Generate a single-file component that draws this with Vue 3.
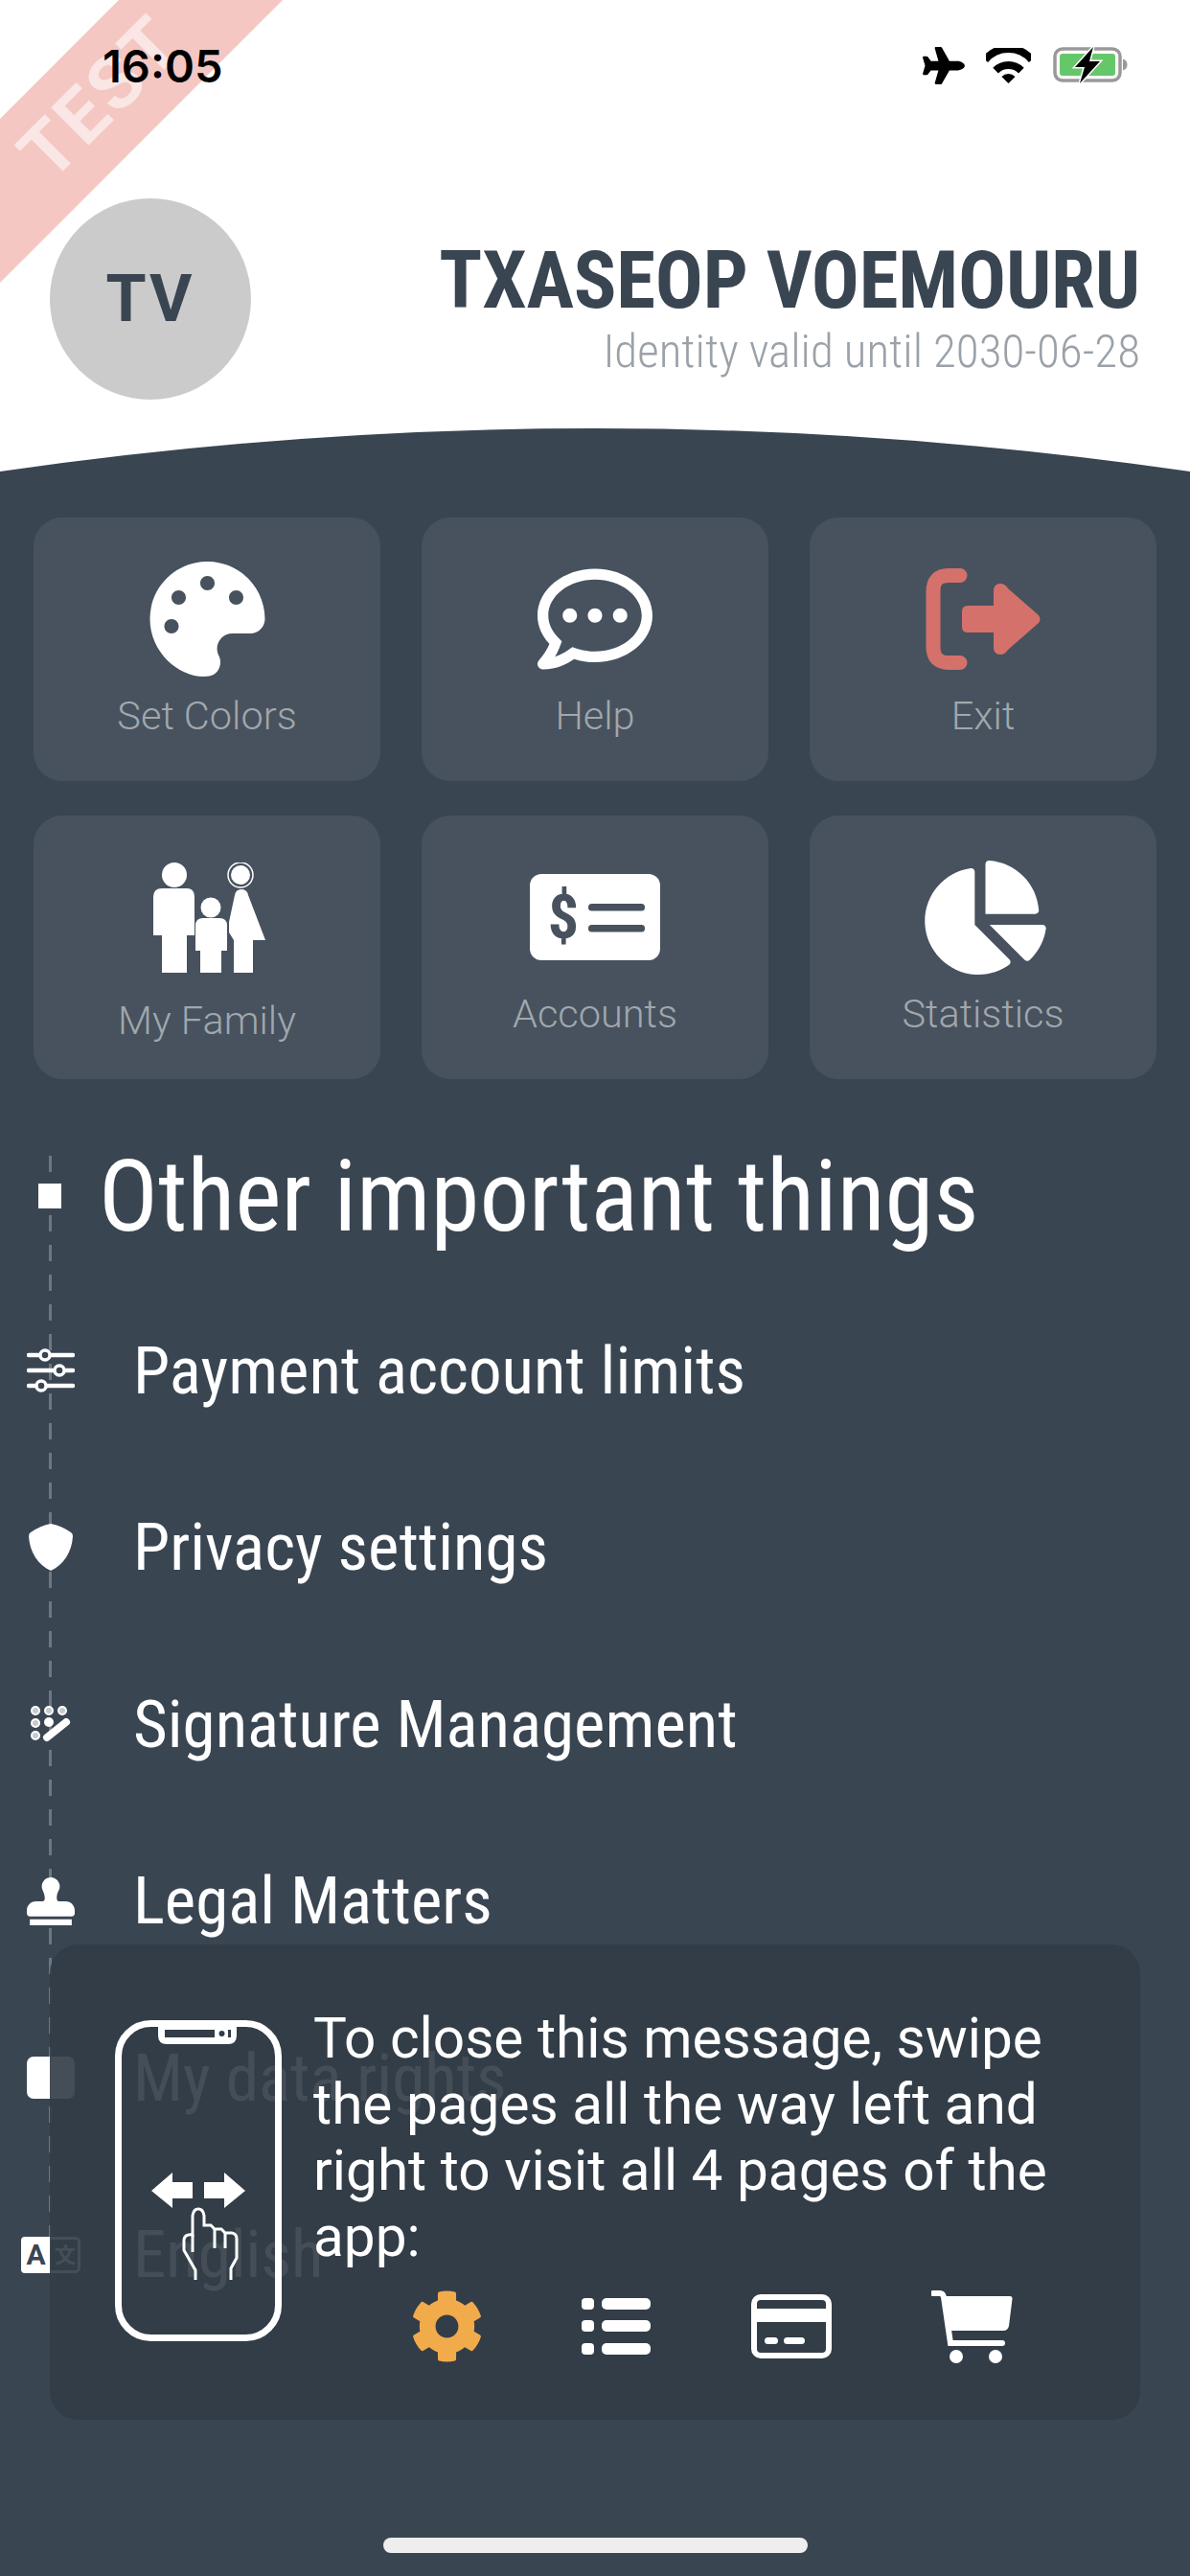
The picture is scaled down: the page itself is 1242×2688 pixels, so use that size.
<template>
  <div class="page">
    <div class="ribbon"><span class="ribbon-text">TEST</span></div>

    <header class="top">
      <div class="status-bar">
        <span class="time">16:05</span>
        <div class="status-icons">
          <svg class="st-plane" viewBox="0 0 576 512"><path fill="#000" d="M480 192H365.71L260.61 8.06A16.014 16.014 0 0 0 246.71 0h-65.5c-10.63 0-18.3 10.17-15.38 20.39L214.86 192H112l-43.2-57.6c-3.02-4.03-7.77-6.4-12.8-6.4H16.01C5.6 128-2.04 137.78.49 147.88L32 256 .49 364.12C-2.04 374.22 5.6 384 16.01 384H56c5.04 0 9.78-2.37 12.8-6.4L112 320h102.86l-49.03 171.6c-2.92 10.22 4.75 20.4 15.38 20.4h65.5c5.74 0 11.04-3.08 13.89-8.06L365.71 320H480c35.35 0 96-28.65 96-64s-60.65-64-96-64z" /></svg>
          <svg class="st-wifi" viewBox="0 0 47 37">
            <path d="M-1 12.4A32 32 0 0 1 48 12.4" fill="none" stroke="#000" stroke-width="8" />
            <path d="M10.1 23.6A19 19 0 0 1 36.9 23.6" fill="none" stroke="#000" stroke-width="8" />
            <path d="M23.5 37L16.4 29.9A10 10 0 0 1 30.6 29.9Z" fill="#000" />
          </svg>
          <svg class="st-battery" viewBox="0 0 80 40">
            <rect x="2" y="3" width="68" height="33" rx="8" fill="none" stroke="#999" stroke-width="3.5" />
            <rect x="7" y="8" width="58" height="23" rx="3" fill="#66c76a" />
            <path d="M73 13.5c3 1 4.5 3 4.5 6s-1.500 5-4.500 6z" fill="#999" />
            <path d="M42 1L23 22H33L28 39L49 16H38Z" fill="#000" stroke="#fff" stroke-width="3" paint-order="stroke" />
          </svg>
        </div>
      </div>

      <div class="profile">
        <div class="avatar">TV</div>
        <div class="identity">
          <div class="name">TXASEOP VOEMOURU</div>
          <div class="valid">Identity valid until 2030-06-28</div>
        </div>
      </div>
    </header>

    <svg class="curve" viewBox="0 0 1242 45" preserveAspectRatio="none">
      <path d="M0 45Q621 -45 1242 45Z" fill="#3a4552" />
    </svg>

    <main class="content">
      <section class="tiles">
        <div v-for="tile in tiles" :key="tile.label" class="tile">
          <div class="tile-icon">
            <svg
              :class="{ nudge: tile.label === 'Statistics' || tile.label === 'My Family' }"
              :viewBox="tile.box"
              :width="tile.w"
              :height="tile.h"
            >
              <g v-if="tile.label === 'My Family'" fill="#fff">
                <circle cx="23" cy="13" r="13" />
                <path d="M1 36q0-9 9-9h26q8 0 8 9v40h-8v39H10V76H1z" />
                <circle cx="61" cy="47" r="10.500" />
                <path d="M45 66q0-8 8-8h17q8 0 8 8v26h-6v23H50V92h-5z" />
                <circle cx="92" cy="13" r="13" fill="none" stroke="#fff" stroke-width="1.500" />
                <circle cx="92" cy="13" r="10" />
                <path d="M80 62l6-28q1-6 7-6t7 6l18 47h-13v34H85V81l-5-8z" />
              </g>
              <g v-else-if="tile.label === 'Accounts'">
                <rect width="136" height="90" rx="12" fill="#fff" />
                <text x="35" y="67" class="dollar">$</text>
                <rect x="61" y="31" width="59" height="7.500" rx="3.500" fill="#47525e" />
                <rect x="61" y="53" width="59" height="7.500" rx="3.500" fill="#47525e" />
              </g>
              <g v-else-if="tile.label === 'Exit'" fill="#d4716b">
                <path d="M36 7.500H24Q8 7.500 8 24V82Q8 98.500 24 98.500H36" fill="none" stroke="#d4716b" stroke-width="15" stroke-linecap="round" />
                <path d="M44 39H71V24Q71 16 78 16Q83 16 86 21L118 49Q121 53 118 57L86 85Q83 90 78 90Q71 90 71 82V67H44Q38 67 38 61V45Q38 39 44 39Z" />
              </g>
              <path v-else :fill="tile.color" fill-rule="evenodd" :d="tile.path" />
            </svg>
          </div>
          <div class="tile-label" :class="{ low: tile.label === 'My Family' }">{{ tile.label }}</div>
        </div>
      </section>

      <section class="things">
        <div class="dash-line"></div>
        <div class="things-head">
          <span class="bullet"></span>
          <h1 class="things-title"><span>Other important things</span></h1>
        </div>
        <div v-for="item in items" :key="item" class="thing">
          <div class="thing-icon">
            <svg v-if="item === 'Payment account limits'" width="50" height="46" viewBox="0 0 50 46">
              <g stroke="#fff" stroke-width="4.500" stroke-linecap="round" fill="#3a4552">
                <path d="M2 7H48M2 23H48M2 39H48" />
                <circle cx="19" cy="7" r="5" stroke-width="3.500" />
                <circle cx="34" cy="23" r="5" stroke-width="3.500" />
                <circle cx="15" cy="39" r="5" stroke-width="3.500" />
              </g>
            </svg>
            <svg v-else-if="item === 'Privacy settings'" width="46" height="50" viewBox="0 0 46 50">
              <path fill="#fff" d="M23 0Q34 2 44 9Q46 10 46 13C45 30 36 43 23 49C10 43 1 30 0 13Q0 10 2 9Q12 2 23 0Z" />
            </svg>
            <svg v-else-if="item === 'Signature Management'" width="42" height="38" viewBox="0 0 42 38">
              <g fill="#c5c9cd" stroke="#fff" stroke-width="2">
                <circle cx="5" cy="5" r="4" />
                <circle cx="19" cy="5" r="4" />
                <circle cx="33" cy="5" r="4" />
                <circle cx="5" cy="18" r="4" />
                <circle cx="5" cy="31" r="4" />
                <circle cx="19" cy="17" r="5" fill="#fff" stroke="none" />
              </g>
              <path d="M17 33L37 17" stroke="#fff" stroke-width="8" stroke-linecap="round" />
            </svg>
            <svg v-else-if="item === 'Legal Matters'" width="50" height="50" viewBox="0 0 512 512">
              <path fill="#fff" d="M32 512h448v-64H32v64zm384-256h-66.56c-16.26 0-29.44-13.18-29.44-29.44v-9.46c0-27.37 8.88-53.41 21.46-77.72 9.11-17.61 12.9-38.39 9.05-60.42-6.77-38.78-38.47-70.7-77.26-77.45C212.62-9.04 160 37.33 160 96c0 14.16 3.12 27.54 8.69 39.58C182.02 164.43 192 194.7 192 226.49v.07c0 16.26-13.18 29.44-29.44 29.44H96c-53.02 0-96 42.98-96 96v32c0 17.67 14.33 32 32 32h448c17.67 0 32-14.33 32-32v-32c0-53.02-42.98-96-96-96z" />
            </svg>
            <svg v-else-if="item === 'My data rights'" width="50" height="44" viewBox="0 0 50 44">
              <rect width="50" height="44" rx="7" fill="#fff" />
            </svg>
            <svg v-else width="62" height="38" viewBox="0 0 62 38">
              <rect x="1.500" y="1.500" width="59" height="35" rx="4" fill="#3a4552" stroke="#fff" stroke-width="3" />
              <path d="M0 4q0-4 4-4h27v38H4q-4 0-4-4z" fill="#fff" />
              <text x="15.500" y="29" class="lang-a">A</text>
              <text x="46" y="27" class="lang-b">文</text>
            </svg>
          </div>
          <span class="thing-text">{{ item }}</span>
        </div>
      </section>
    </main>

    <aside class="swipe-card">
      <svg class="swipe-phone" width="200" height="360" viewBox="0 0 200 360">
        <rect x="13.500" y="21.500" width="167" height="328" rx="34" fill="none" stroke="#fff" stroke-width="7" />
        <path d="M55 20h82v14q0 9-9 9H64q-9 0-9-9z" fill="#fff" />
        <rect x="62" y="28" width="52" height="8" fill="#343d47" />
        <rect x="128" y="28" width="3" height="8" fill="#343d47" />
        <circle cx="121.500" cy="32" r="3" fill="#343d47" />
        <path d="M48 196L70 177V187H91V204H70V214Z" fill="#fff" />
        <path d="M146 196L124 177V187H103V204H124V214Z" fill="#fff" />
        <g fill="none" stroke="#fff" stroke-width="3">
          <path d="M94 289V279L82 258V247Q83 241 91 242V222Q92 215 97 215T103 222V232H110L114 236H121L125 240H132Q137 241 137 246V266L131 277V289" />
          <path d="M91 242V260M114 236V256M125 240V256" />
        </g>
      </svg>
      <div class="swipe-body">
        <p class="swipe-text">To close this message, swipe the pages all the way left and right to visit all 4 pages of the app:</p>
        <div class="swipe-icons">
          <svg width="71" height="77" viewBox="18 8 476 496"><path fill="#f2ab4b" d="M487.4 315.7l-42.6-24.6c4.3-23.2 4.3-47 0-70.2l42.6-24.6c4.9-2.8 7.1-8.6 5.5-14-11.1-35.6-30-67.8-54.7-94.6-3.8-4.1-10-5.1-14.8-2.3L380.800 110c-17.9-15.4-38.5-27.3-60.8-35.1V25.800c0-5.6-3.9-10.5-9.4-11.7-36.7-8.2-74.3-7.8-109.2 0-5.5 1.2-9.4 6.1-9.4 11.7V75c-22.2 7.9-42.8 19.8-60.8 35.1L88.700 85.500c-4.9-2.8-11-1.9-14.8 2.3-24.7 26.7-43.6 58.9-54.7 94.6-1.7 5.4.6 11.2 5.5 14L67.300 221c-4.3 23.2-4.3 47 0 70.2l-42.6 24.6c-4.9 2.8-7.1 8.6-5.5 14 11.1 35.6 30 67.8 54.7 94.6 3.8 4.1 10 5.1 14.8 2.3l42.6-24.6c17.9 15.4 38.5 27.3 60.8 35.1v49.2c0 5.6 3.9 10.5 9.4 11.7 36.7 8.2 74.3 7.8 109.2 0 5.5-1.2 9.4-6.1 9.4-11.7v-49.2c22.2-7.9 42.8-19.8 60.8-35.1l42.6 24.6c4.9 2.8 11 1.9 14.8-2.3 24.7-26.7 43.6-58.9 54.7-94.6 1.5-5.5-.7-11.3-5.6-14.1zM256 336c-44.1 0-80-35.9-80-80s35.9-80 80-80 80 35.9 80 80-35.9 80-80 80z" /></svg>
          <svg width="74" height="60" viewBox="0 0 74 60">
            <g fill="#fff">
              <rect x="1" y="0" width="13" height="12" rx="4" />
              <rect x="22" y="0" width="51" height="12" rx="5" />
              <rect x="1" y="23" width="13" height="12" rx="4" />
              <rect x="22" y="23" width="51" height="12" rx="5" />
              <rect x="1" y="47" width="13" height="12" rx="4" />
              <rect x="22" y="47" width="51" height="12" rx="5" />
            </g>
          </svg>
          <svg width="84" height="67" viewBox="0 0 84 67">
            <rect x="3" y="3" width="78" height="61" rx="7" fill="none" stroke="#fff" stroke-width="6" />
            <rect x="3" y="15" width="78" height="14" fill="#fff" />
            <rect x="14" y="45" width="14" height="7" rx="3.500" fill="#fff" />
            <rect x="34" y="45" width="22" height="7" rx="3.500" fill="#fff" />
          </svg>
          <svg width="85" height="77" viewBox="0 0 85 77">
            <path d="M2 4H9Q12 4 13 8L20 56H74" fill="none" stroke="#fff" stroke-width="6" stroke-linecap="round" />
            <path d="M14 7H82Q85 7 84.500 10L81 38Q80 43 75 43H19Z" fill="#fff" />
            <circle cx="26" cy="70" r="7" fill="#fff" />
            <circle cx="67" cy="70" r="7" fill="#fff" />
          </svg>
        </div>
      </div>
    </aside>

    <div class="home-bar"></div>
  </div>
</template>

<script setup>
const tiles = [
  {
    label: "Set Colors",
    color: "#fff",
    w: 121,
    h: 120,
    box: "0 0 512 512",
    path: "M204.3 5C104.9 24.4 24.8 104.3 5.2 203.4c-37 187 131.7 326.4 258.8 306.7 41.2-6.4 61.4-54.6 42.5-91.7-23.1-45.4 9.9-98.4 60.9-98.4h79.7c35.8 0 64.8-29.6 64.9-65.3C511.5 97.1 368.1-26.9 204.3 5zM96 320c-17.7 0-32-14.3-32-32s14.3-32 32-32 32 14.3 32 32-14.3 32-32 32zm32-128c-17.7 0-32-14.3-32-32s14.3-32 32-32 32 14.3 32 32-14.3 32-32 32zm128-64c-17.7 0-32-14.3-32-32s14.3-32 32-32 32 14.3 32 32-14.3 32-32 32zm128 64c-17.7 0-32-14.3-32-32s14.3-32 32-32 32 14.3 32 32-14.3 32-32 32z",
  },
  {
    label: "Help",
    color: "#fff",
    w: 120,
    h: 106,
    box: "0 32 512 448",
    path: "M144 208c-17.7 0-32 14.3-32 32s14.3 32 32 32 32-14.3 32-32-14.3-32-32-32zm112 0c-17.7 0-32 14.3-32 32s14.3 32 32 32 32-14.3 32-32-14.3-32-32-32zm112 0c-17.7 0-32 14.3-32 32s14.3 32 32 32 32-14.3 32-32-14.3-32-32-32zM256 32C114.6 32 0 125.1 0 240c0 47.6 19.9 91.2 52.9 126.3C38 405.7 7 439.1 6.5 439.5c-6.6 7-8.4 17.2-4.6 26S14.4 480 24 480c61.5 0 110-25.7 139.1-46.3C192 442.8 223.2 448 256 448c141.4 0 256-93.1 256-208S397.4 32 256 32zm0 368c-26.7 0-53.1-4.1-78.4-12.1l-22.7-7.2-19.5 13.8c-14.3 10.1-33.9 21.4-57.5 29 7.3-12.1 14.4-25.7 19.9-40.2l10.6-28.1-20.6-21.8C69.7 314.1 48 282.2 48 240c0-88.2 93.3-160 208-160s208 71.8 208 160-93.3 160-208 160z",
  },
  { label: "Exit", w: 120, h: 106, box: "0 0 120 106" },
  { label: "My Family", w: 120, h: 115, box: "0 0 120 115" },
  { label: "Accounts", w: 136, h: 90, box: "0 0 136 90" },
  {
    label: "Statistics",
    color: "#fff",
    w: 127,
    h: 119,
    box: "0 0 544 512",
    path: "M527.79 288H290.5l158.03 158.03c6.04 6.04 15.98 6.53 22.19 .68 38.7-36.46 65.32-85.61 73.13-140.86 1.34-9.46-6.51-17.85-16.06-17.85zm-15.83-64.8C503.72 103.74 408.26 8.28 288.8 .04 279.68-.59 272 7.1 272 16.24V240h223.77c9.14 0 16.82-7.68 16.19-16.8zM224 288V50.71c0-9.55-8.39-17.4-17.84-16.06C86.99 51.49-4.1 155.6 .14 280.37 4.5 408.51 114.83 513.59 243.03 511.98c50.4-.63 96.97-16.87 135.26-44.03 7.9-5.6 8.42-17.23 1.57-24.08L224 288z",
  },
];

const items = [
  "Payment account limits",
  "Privacy settings",
  "Signature Management",
  "Legal Matters",
  "My data rights",
  "English",
];
</script>

<style>
html,
body {
  margin: 0;
  background: #3a4552;
}
</style>

<style scoped>
.page {
  position: relative;
  width: 1242px;
  height: 2688px;
  overflow: hidden;
  background: #3a4552;
  font-family: Roboto, "Liberation Sans", sans-serif;
}

.ribbon {
  position: absolute;
  z-index: 1;
  left: -150px;
  top: 49px;
  width: 500px;
  height: 121px;
  background: #f4c7c3;
  transform: rotate(-45deg);
  display: flex;
  align-items: center;
  justify-content: center;
}
.ribbon-text {
  position: relative;
  left: 9px;
  top: -2px;
  color: #fae6e4;
  font-size: 78px;
  font-weight: 700;
  letter-spacing: 3px;
}

.top {
  height: 447px;
  background: #fff;
}
.status-bar {
  position: relative;
  z-index: 2;
  display: flex;
  justify-content: space-between;
  align-items: center;
  height: 68px;
  padding: 34px 63px 0 107px;
}
.time {
  font-family: Inter, "Liberation Sans", sans-serif;
  font-size: 47px;
  font-weight: 600;
  color: #000;
}
.status-icons {
  display: flex;
  align-items: center;
}
.st-plane {
  width: 44px;
  height: 39px;
}
.st-wifi {
  width: 47px;
  height: 37px;
  margin-left: 22px;
}
.st-battery {
  width: 80px;
  height: 40px;
  margin-left: 23px;
}

.profile {
  position: relative;
  z-index: 2;
  display: flex;
  justify-content: space-between;
  align-items: center;
  padding: 105px 52px 0;
}
.avatar {
  display: flex;
  align-items: center;
  justify-content: center;
  width: 210px;
  height: 210px;
  border-radius: 50%;
  background: #cbcbcb;
  color: #3a4552;
  font-size: 68px;
  font-weight: 700;
  letter-spacing: 3px;
}
.identity {
  padding-top: 22px;
  text-align: right;
  font-stretch: 75%;
}
.name {
  font-size: 83px;
  font-weight: 700;
  letter-spacing: -0.2px;
  line-height: 88px;
  color: #3a4552;
}
.valid {
  font-size: 49px;
  font-weight: 300;
  line-height: 60px;
  color: #9aa1a8;
}

.curve {
  display: block;
  width: 1242px;
  height: 45px;
  background: #fff;
}

.tiles {
  display: grid;
  grid-template-columns: repeat(3, 362px);
  gap: 36px 43px;
  padding: 48px 35px 0;
}
.tile {
  display: flex;
  flex-direction: column;
  align-items: center;
  height: 275px;
  border-radius: 30px;
  background: #47525e;
}
.tile-icon {
  display: flex;
  align-items: center;
  justify-content: center;
  height: 166px;
  padding-top: 46px;
  box-sizing: border-box;
}
.nudge {
  margin-left: 5px;
}
.tile-label {
  margin-top: 17px;
  font-size: 41.500px;
  font-weight: 300;
  line-height: 48px;
  color: #a1a7ad;
}
.tile-label.low {
  margin-top: 24px;
}
.dollar {
  font-family: Roboto, sans-serif;
  font-size: 64px;
  font-weight: 700;
  font-stretch: 80%;
  fill: #47525e;
  text-anchor: middle;
}

.things {
  position: relative;
  padding: 62px 0 0 40px;
}
.dash-line {
  position: absolute;
  left: 51px;
  top: 80px;
  width: 3px;
  height: 1170px;
  background: repeating-linear-gradient(to bottom, #6d7782 0 17px, transparent 17px 31px);
}
.things-head {
  position: relative;
  display: flex;
  align-items: center;
  height: 120px;
  margin-bottom: 30px;
}
.bullet {
  width: 24px;
  height: 26px;
  background: #fff;
}
.things-title {
  margin: 0 0 0 39px;
  font-size: 103px;
  font-weight: 400;
  font-stretch: 78%;
  color: #fff;
  white-space: nowrap;
}
.thing {
  position: relative;
  display: flex;
  align-items: center;
  height: 184.500px;
  margin-left: -40px;
}
.thing-icon {
  display: flex;
  align-items: center;
  justify-content: center;
  width: 106px;
  margin-right: 33px;
}
.thing-text {
  font-size: 69px;
  font-stretch: 75%;
  color: #fff;
  white-space: nowrap;
}
.lang-a {
  font-family: Roboto, sans-serif;
  font-size: 30px;
  font-weight: 700;
  fill: #3a4552;
  text-anchor: middle;
}
.lang-b {
  font-family: "Noto Sans CJK SC", sans-serif;
  font-size: 22px;
  font-weight: 700;
  fill: #fff;
  text-anchor: middle;
}

.swipe-card {
  position: absolute;
  z-index: 3;
  left: 52px;
  top: 2029px;
  display: flex;
  width: 1138px;
  height: 496px;
  box-sizing: border-box;
  padding: 61px 0 0 58px;
  border-radius: 30px;
  background: rgba(51, 60, 70, 0.91);
}
.swipe-phone {
  flex: none;
  margin-right: 17px;
}
.swipe-text {
  margin: 3px 0 0;
  width: 790px;
  font-size: 58.500px;
  line-height: 69px;
  color: #fff;
}
.swipe-icons {
  display: flex;
  align-items: center;
  margin: 20px 0 0 104px;
}
.swipe-icons svg {
  margin-right: 104px;
}

.home-bar {
  position: absolute;
  left: 400px;
  bottom: 24px;
  width: 443px;
  height: 16px;
  border-radius: 8px;
  background: #eee;
}
</style>
